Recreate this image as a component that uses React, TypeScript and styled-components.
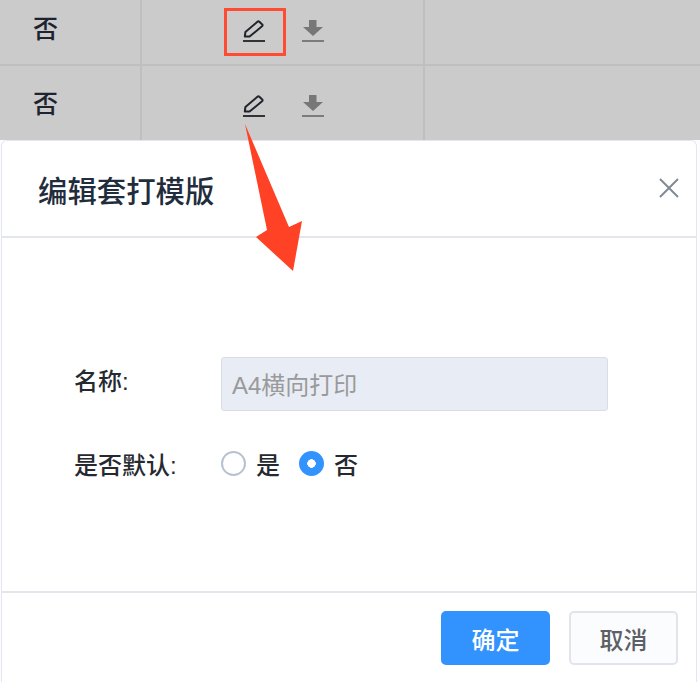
import * as React from 'react';
import styled, { createGlobalStyle } from 'styled-components';

const GlobalStyle = createGlobalStyle`
  html, body {
    margin: 0;
    padding: 0;
    background: #fdfdff;
    font-family: "Liberation Sans", "Noto Sans CJK SC", sans-serif;
  }
`;

const Page = styled.div`
  position: relative;
  width: 700px;
  height: 682px;
  overflow: hidden;
  display: flex;
  flex-direction: column;
`;

const Table = styled.div`
  height: 140px;
  flex: none;
  overflow: hidden;
  background: #cbcbcb;
`;

const Row = styled.div<{ $height: number; $inset: number; $ruled?: boolean }>`
  display: grid;
  grid-template-columns: 142px 283px 1fr;
  height: ${({ $height }) => $height}px;
  box-sizing: border-box;
  border-bottom: ${({ $ruled }) => ($ruled ? '2px solid #bfbfbf' : 'none')};

  > * {
    padding-top: ${({ $inset }) => $inset}px;
  }
`;

const Cell = styled.div`
  border-right: 2px solid #bfbfbf;
  font-size: 25px;
  font-weight: 500;
  color: #1d2430;
  padding-left: 33px;
  line-height: 34px;
`;

const ActionCell = styled.div`
  border-right: 2px solid #bfbfbf;
  display: flex;
  justify-content: center;
  gap: 37px;
  padding-left: 2px;
`;

const EmptyCell = styled.div``;

const IconSlot = styled.span<{ $marked?: boolean }>`
  position: relative;
  display: block;
  width: 22px;
  height: 24px;
  margin-top: 8px;

  &::after {
    content: '';
    display: ${({ $marked }) => ($marked ? 'block' : 'none')};
    position: absolute;
    left: -19px;
    top: -12px;
    width: 56px;
    height: 42px;
    border: 3px solid #ff4b33;
  }
`;

const Dialog = styled.div`
  flex: 1;
  margin: 0 3px 0 1px;
  background: #ffffff;
  border: 1px solid #e3e6f0;
  border-bottom: none;
  border-radius: 6px 6px 0 0;
  display: flex;
  flex-direction: column;
`;

const Header = styled.div`
  height: 95px;
  flex: none;
  display: flex;
  align-items: center;
  justify-content: space-between;
  padding: 0 16px 0 36px;
  border-bottom: 2px solid #e4e6ee;
`;

const Title = styled.h2`
  margin: 0 0 -1px;
  font-size: 29.4px;
  font-weight: 500;
  color: #1f2d3d;
`;

const CloseButton = styled.button`
  border: none;
  background: none;
  padding: 0;
  width: 22px;
  height: 22px;
  margin-bottom: 1px;
  color: #808a96;
`;

const Body = styled.div`
  flex: 1;
  padding: 119px 0 0 72px;
  display: flex;
  flex-direction: column;
  gap: 35px;
`;

const FormRow = styled.div`
  display: flex;
  align-items: center;
`;

const FieldLabel = styled.label<{ $raise?: number }>`
  width: 147px;
  flex: none;
  font-size: 24px;
  font-weight: 500;
  color: #262a30;
  margin-bottom: ${({ $raise }) => $raise ?? 0}px;
`;

const Input = styled.div`
  width: 387px;
  height: 54px;
  box-sizing: border-box;
  padding: 0 0 2px 10px;
  display: flex;
  align-items: center;
  background: #e8ecf5;
  border: 1px solid #d9dde8;
  border-radius: 3px;
  font-size: 24px;
  color: #9a9a9a;
`;

const RadioGroup = styled.div`
  display: flex;
  align-items: center;
  font-size: 24px;
  font-weight: 500;
  color: #262a30;
`;

const RadioCircle = styled.span<{ $checked?: boolean }>`
  display: block;
  flex: none;
  width: 25px;
  height: 25px;
  box-sizing: border-box;
  border-radius: 50%;
  margin-right: 10px;
  background: ${({ $checked }) =>
    $checked ? 'radial-gradient(circle, #ffffff 0 4px, #3293fe 4.5px)' : '#ffffff'};
  border: 2px solid ${({ $checked }) => ($checked ? '#3293fe' : '#b8c2cf')};
`;

const RadioText = styled.span`
  margin-right: 19px;
`;

const Footer = styled.div`
  height: 91px;
  flex: none;
  box-sizing: border-box;
  border-top: 2px solid #e4e6ee;
  display: flex;
  justify-content: flex-end;
  gap: 19px;
  padding: 18px 18px 0 0;
`;

const Button = styled.button<{ $primary?: boolean }>`
  width: 109px;
  height: 54px;
  box-sizing: border-box;
  border-radius: 5px;
  font-family: inherit;
  font-size: 24px;
  font-weight: 500;
  padding: 0;
  background: ${({ $primary }) => ($primary ? '#3293fe' : '#fbfcfe')};
  color: ${({ $primary }) => ($primary ? '#ffffff' : '#5c6066')};
  border: 2px solid ${({ $primary }) => ($primary ? '#3293fe' : '#e1e4ec')};
`;

const ArrowMark = styled.svg`
  position: absolute;
  left: 240px;
  top: 120px;
`;

const EditIcon = () => (
  <svg width="22" height="24" viewBox="0 0 22 24">
    <path
      d="M1.8 16.6 L2.4 12 L14.4 1.8 Q15.4 1 16.4 1.8 L19.2 4.4 Q20 5.4 19 6.3 L6.6 16.6 Z"
      fill="none"
      stroke="#20242b"
      strokeWidth="2"
      strokeLinejoin="round"
    />
    <rect x="0" y="20" width="22" height="2" fill="#30343a" />
  </svg>
);

const DownloadIcon = () => (
  <svg width="22" height="24" viewBox="0 0 22 24">
    <path d="M7 0 H14.5 V7 H21 L11 16 L1 7 H7 Z" fill="#777777" />
    <rect x="0" y="20" width="22" height="2" fill="#7c7c7c" />
  </svg>
);

const TableRow = ({
  height,
  inset,
  marked,
  ruled,
}: {
  height: number;
  inset: number;
  marked?: boolean;
  ruled?: boolean;
}) => (
  <Row $height={height} $inset={inset} $ruled={ruled}>
    <Cell>否</Cell>
    <ActionCell>
      <IconSlot $marked={marked}>
        <EditIcon />
      </IconSlot>
      <IconSlot>
        <DownloadIcon />
      </IconSlot>
    </ActionCell>
    <EmptyCell />
  </Row>
);

export default function App() {
  return (
    <Page>
      <GlobalStyle />
      <Table>
        <TableRow height={66} inset={12} marked ruled />
        <TableRow height={74} inset={21} />
      </Table>
      <Dialog>
        <Header>
          <Title>编辑套打模版</Title>
          <CloseButton aria-label="close">
            <svg width="22" height="22" viewBox="0 0 22 22">
              <path d="M2 2 L20 20 M20 2 L2 20" stroke="currentColor" strokeWidth="2" fill="none" />
            </svg>
          </CloseButton>
        </Header>
        <Body>
          <FormRow>
            <FieldLabel $raise={10}>名称:</FieldLabel>
            <Input>A4横向打印</Input>
          </FormRow>
          <FormRow>
            <FieldLabel>是否默认:</FieldLabel>
            <RadioGroup>
              <RadioCircle />
              <RadioText>是</RadioText>
              <RadioCircle $checked />
              <span>否</span>
            </RadioGroup>
          </FormRow>
        </Body>
        <Footer>
          <Button $primary>确定</Button>
          <Button>取消</Button>
        </Footer>
      </Dialog>
      <ArrowMark width="70" height="155" viewBox="0 0 70 155">
        <polygon points="5,4 49,107 62,101 53,151 16,117 27,110" fill="#ff4125" />
      </ArrowMark>
    </Page>
  );
}
